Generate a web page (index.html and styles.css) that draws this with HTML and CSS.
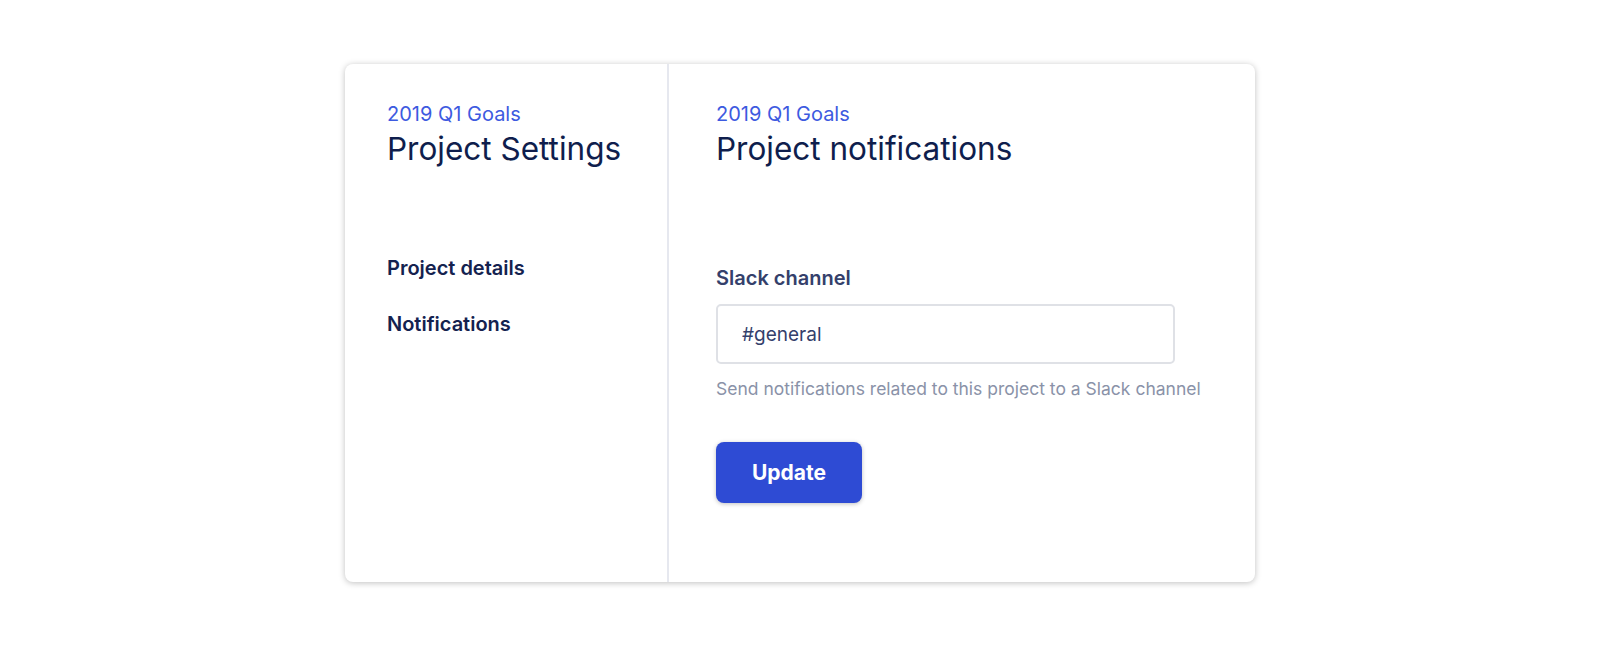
FILE: index.html
```html
<!DOCTYPE html>
<html>
<head>
  <meta charset="utf-8">
  <title>Project notifications</title>
  <link rel="stylesheet" href="styles.css">
</head>
<body>
  <div class="card">
    <aside class="side">
      <div class="eyebrow">2019 Q1 Goals</div>
      <h1 class="title">Project Settings</h1>
      <nav class="nav">
        <a href="#details">Project details</a>
        <a href="#notifications">Notifications</a>
      </nav>
    </aside>
    <main class="content">
      <div class="eyebrow">2019 Q1 Goals</div>
      <h1 class="title">Project notifications</h1>
      <form class="form">
        <label for="channel">Slack channel</label>
        <input type="text" id="channel" value="#general">
        <p class="hint">Send notifications related to this project to a Slack channel</p>
        <button type="button">Update</button>
      </form>
    </main>
  </div>
</body>
</html>
```

FILE: styles.css
```css
* { box-sizing: border-box; }
body {
  margin: 0;
  height: 646px;
  display: flex;
  align-items: center;
  justify-content: center;
  background: #ffffff;
  font-family: Inter, "Liberation Sans", sans-serif;
  color: #0f1e4d;
}
.card {
  width: 910px;
  height: 518px;
  display: grid;
  grid-template-columns: 324px 1fr;
  background: #fff;
  border-radius: 8px;
  box-shadow: 0 1px 6px rgba(0, 0, 0, 0.25);
}
.side {
  padding: 38px 20px 36px 42px;
  border-right: 2px solid #e6e8ef;
}
.content {
  padding: 38px 47px;
}
.eyebrow {
  font-size: 20px;
  line-height: 24px;
  color: #3d5ae0;
}
.title {
  margin: 3px 0 0;
  font-size: 31.5px;
  line-height: 40px;
  font-weight: 400;
  color: #0f1e4d;
  white-space: nowrap;
}
.nav {
  margin-top: 87px;
  display: flex;
  flex-direction: column;
  gap: 32px;
}
.nav a {
  font-size: 20px;
  line-height: 24px;
  font-weight: 600;
  color: #14224f;
  text-decoration: none;
}
.form {
  margin-top: 97px;
  display: flex;
  flex-direction: column;
  align-items: flex-start;
}
.form label {
  font-size: 20px;
  line-height: 24px;
  font-weight: 600;
  color: #34406b;
}
.form input {
  margin-top: 14px;
  width: 459px;
  height: 60px;
  padding: 0 24px;
  border: 2px solid #dfe1e6;
  border-radius: 5px;
  font-family: inherit;
  font-size: 19px;
  color: #34406b;
  outline: none;
}
.hint {
  margin: 13px 0 0;
  font-size: 17.5px;
  line-height: 24px;
  color: #8a92a8;
}
.form button {
  margin-top: 41px;
  width: 146px;
  height: 61px;
  border: none;
  border-radius: 8px;
  background: #2e4bd4;
  color: #fff;
  font-family: inherit;
  font-size: 21px;
  font-weight: 700;
  box-shadow: 0 1px 4px rgba(0, 0, 0, 0.25);
}
```
